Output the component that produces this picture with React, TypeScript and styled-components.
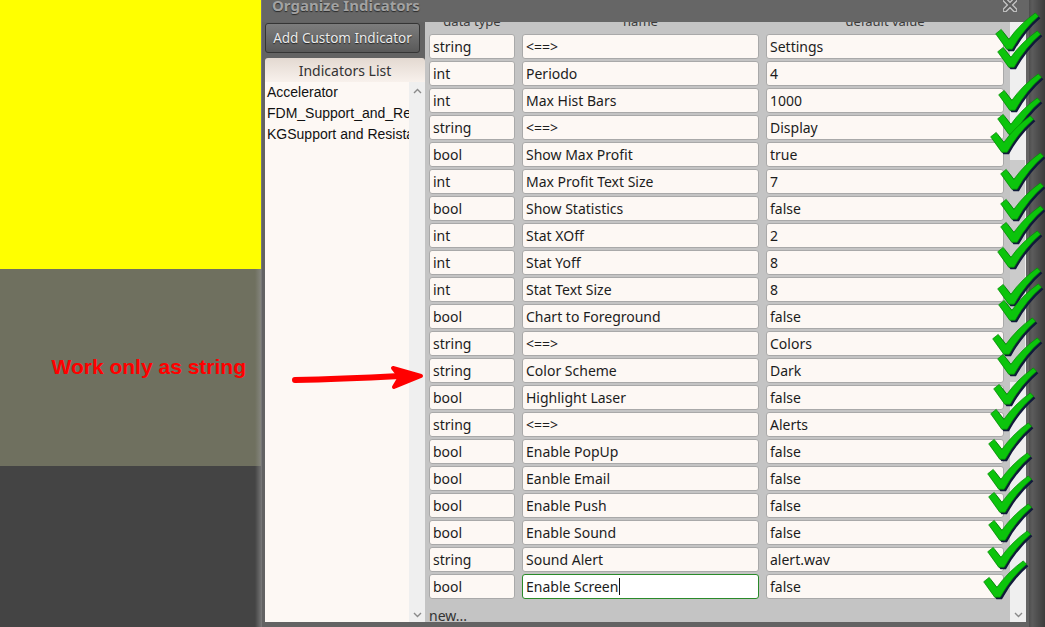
import { FC } from 'react';
import styled, { createGlobalStyle } from 'styled-components';

const GlobalStyle = createGlobalStyle`
    html, body {
        margin: 0;
        padding: 0;
        background: #444444;
        overflow: hidden;
    }
`

const Page = styled.div`
    position: relative;
    display: flex;
    width: 1045px;
    height: 627px;
    overflow: hidden;
    font-family: "Noto Sans", "Open Sans", sans-serif;
`

const LeftColumn = styled.div`
    position: relative;
    width: 261px;
    display: flex;
    flex-direction: column;
    &::after {
        content: '';
        position: absolute;
        top: 269px;
        right: 0;
        bottom: 0;
        width: 6px;
        background: linear-gradient(to right, rgba(140,140,140,0), rgba(150,150,150,0.55));
    }
`

const YellowBlock = styled.div`
    height: 269px;
    background: #ffff00;
`

const OliveBlock = styled.div`
    height: 197px;
    background: #6f705f;
    display: flex;
    align-items: center;
    justify-content: flex-end;
    padding-right: 15px;
`

const Note = styled.span`
    font-family: "Liberation Sans", Arial, sans-serif;
    font-weight: bold;
    font-size: 21px;
    color: #ff0000;
    margin-top: -2px;
`

const DarkBlock = styled.div`
    flex: 1;
    background: #444444;
`

const Window = styled.div`
    width: 767px;
    display: flex;
    flex-direction: column;
    background: #636363;
    border-left: 1px solid #777;
`

const TitleBar = styled.div`
    height: 22px;
    display: flex;
    justify-content: space-between;
    align-items: flex-start;
    padding: 0 12px 0 10px;
    background: #666666;
    overflow: hidden;
`

const Title = styled.span`
    font-weight: bold;
    font-size: 15px;
    line-height: 20px;
    margin-top: -5px;
    color: #a2a2a2;
    text-shadow: 0 1px 1px #2a2a2a;
`

const Body = styled.div`
    flex: 1;
    display: flex;
    padding: 0 3px 5px 3px;
    min-height: 0;
`

const Sidebar = styled.div`
    width: 160px;
    display: flex;
    flex-direction: column;
`

const AddButton = styled.button`
    height: 30px;
    width: 155px;
    margin-top: 1px;
    padding: 0;
    border: 1px solid #353535;
    border-radius: 3px;
    background: linear-gradient(#7d7d7d, #595959);
    color: #ececec;
    text-shadow: 0 1px 1px #222;
    font-family: "Noto Sans", "Open Sans", sans-serif;
    font-size: 13.5px;
`

const ListHeader = styled.div`
    margin-top: 5px;
    height: 24px;
    display: flex;
    align-items: center;
    justify-content: center;
    border-radius: 3px 3px 0 0;
    background: linear-gradient(#e3d9d1, #f8f1ec);
    color: #333;
    font-size: 14px;
`

const ListBox = styled.div`
    flex: 1;
    display: flex;
    min-height: 0;
    background: #fdf8f4;
`

const ListItems = styled.div`
    flex: 1;
    overflow: hidden;
    padding-left: 2px;
`

const ListItem = styled.div`
    font-family: "Liberation Sans", Arial, sans-serif;
    font-size: 14px;
    line-height: 21px;
    color: #111;
    white-space: nowrap;
`

const ScrollTrack = styled.div`
    width: 16px;
    display: flex;
    flex-direction: column;
    align-items: center;
    justify-content: space-between;
    padding: 6px 0 4px;
    background: #efefef;
    position: relative;
`

const Thumb = styled.div`
    position: absolute;
    left: 0;
    right: 1px;
    top: 138px;
    height: 222px;
    background: #cbcbcb;
`

const GridPanel = styled.div`
    flex: 1;
    display: flex;
    min-height: 0;
`

const GridContent = styled.div`
    flex: 1;
    background: #c4c4c4;
    overflow: hidden;
    display: flex;
    flex-direction: column;
    padding-left: 4px;
`

const Columns = styled.div`
    display: grid;
    grid-template-columns: 86px 237px 238px;
    column-gap: 7px;
`

const HeaderRow = styled(Columns)`
    height: 12px;
`

const HeaderLabel = styled.span`
    text-align: center;
    font-size: 13px;
    line-height: 16px;
    color: #3a3a3a;
    transform: translateY(-9px);
`

const Rows = styled.div`
    display: flex;
    flex-direction: column;
    gap: 2px;
`

const Field = styled.div<{ $focused?: boolean }>`
    height: 25px;
    box-sizing: border-box;
    display: flex;
    align-items: center;
    padding-left: 3px;
    border: 1px solid ${p => (p.$focused ? '#2a8a2a' : '#a9a9a9')};
    border-radius: 3px;
    background: ${p => (p.$focused ? '#ffffff' : '#fdf8f4')};
    color: #1c1c1c;
    font-size: 14px;
    white-space: nowrap;
    overflow: hidden;
`

const Caret = styled.span`
    width: 1px;
    height: 17px;
    background: #111;
    margin-left: 1px;
`

const NewLink = styled.div`
    margin-top: 8px;
    font-size: 14px;
    line-height: 18px;
    color: #333;
`

const Overlay = styled.svg`
    position: absolute;
    pointer-events: none;
`

const RightEdge = styled.div`
    flex: 1;
    background: linear-gradient(to right, #4e4e4e, #5c5c5c 20%, #3c3c3c);
`

const Chevron: FC<{ down?: boolean }> = ({ down }) => (
    <svg width="9" height="6" viewBox="0 0 9 6">
        <path d={down ? 'M1 1 L4.5 4.5 L8 1' : 'M1 5 L4.5 1.5 L8 5'} fill="none" stroke="#8a8a8a" strokeWidth="1.4" />
    </svg>
)

const CloseIcon = () => (
    <svg width="14" height="13" viewBox="0 0 14 13" style={{ marginTop: -1 }}>
        <path d="M2 1 L12 11 M12 1 L2 11" stroke="#c4c4c4" strokeWidth="5" strokeLinecap="round" />
        <path d="M2 1 L12 11 M12 1 L2 11" stroke="#5e5e5e" strokeWidth="2.4" strokeLinecap="round" />
    </svg>
)

const rows: [string, string, string][] = [
    ['string', '<==>', 'Settings'],
    ['int', 'Periodo', '4'],
    ['int', 'Max Hist Bars', '1000'],
    ['string', '<==>', 'Display'],
    ['bool', 'Show Max Profit', 'true'],
    ['int', 'Max Profit Text Size', '7'],
    ['bool', 'Show Statistics', 'false'],
    ['int', 'Stat XOff', '2'],
    ['int', 'Stat Yoff', '8'],
    ['int', 'Stat Text Size', '8'],
    ['bool', 'Chart to Foreground', 'false'],
    ['string', '<==>', 'Colors'],
    ['string', 'Color Scheme', 'Dark'],
    ['bool', 'Highlight Laser', 'false'],
    ['string', '<==>', 'Alerts'],
    ['bool', 'Enable PopUp', 'false'],
    ['bool', 'Eanble Email', 'false'],
    ['bool', 'Enable Push', 'false'],
    ['bool', 'Enable Sound', 'false'],
    ['string', 'Sound Alert', 'alert.wav'],
    ['bool', 'Enable Screen', 'false'],
];

// vertex (bottom point) of every hand-placed tick
const ticks: [number, number][] = [
    [1010, 47], [1012, 65], [1013, 108], [1012, 132], [1005, 150], [1015, 187],
    [1015, 217], [1015, 240], [1012, 265], [1012, 302], [1013, 318], [1007, 352],
    [1012, 372], [1008, 402], [1005, 427], [1003, 457], [1002, 487], [1003, 510],
    [1003, 538], [1002, 565], [998, 595],
];

const TICK = 'M-13 -12 L-8 -16 L-1 -7 Q9 -21 23 -31 L26 -28 Q12 -16 2 2 L-3 2 Z';

const App = () => {
    const focusedRow = rows.length - 1;
    return (
        <Page>
            <GlobalStyle />
            <LeftColumn>
                <YellowBlock />
                <OliveBlock>
                    <Note>Work only as string</Note>
                </OliveBlock>
                <DarkBlock />
            </LeftColumn>
            <Window>
                <TitleBar>
                    <Title>Organize Indicators</Title>
                    <CloseIcon />
                </TitleBar>
                <Body>
                    <Sidebar>
                        <AddButton>Add Custom Indicator</AddButton>
                        <ListHeader>Indicators List</ListHeader>
                        <ListBox>
                            <ListItems>
                                <ListItem>Accelerator</ListItem>
                                <ListItem>FDM_Support_and_Resistance</ListItem>
                                <ListItem>KGSupport and Resistance</ListItem>
                            </ListItems>
                            <ScrollTrack>
                                <Chevron />
                                <Chevron down />
                            </ScrollTrack>
                        </ListBox>
                    </Sidebar>
                    <GridPanel>
                        <GridContent>
                            <HeaderRow>
                                <HeaderLabel>data type</HeaderLabel>
                                <HeaderLabel>name</HeaderLabel>
                                <HeaderLabel>default value</HeaderLabel>
                            </HeaderRow>
                            <Rows>
                                {rows.map(([type, name, value], i) => (
                                    <Columns key={i}>
                                        <Field>{type}</Field>
                                        <Field $focused={i === focusedRow}>
                                            {name}
                                            {i === focusedRow && <Caret />}
                                        </Field>
                                        <Field>{value}</Field>
                                    </Columns>
                                ))}
                            </Rows>
                            <NewLink>new...</NewLink>
                        </GridContent>
                        <ScrollTrack>
                            <Thumb />
                            <Chevron />
                            <Chevron down />
                        </ScrollTrack>
                    </GridPanel>
                </Body>
            </Window>
            <RightEdge />

            <Overlay width="140" height="36" viewBox="0 0 140 36" style={{ left: 290, top: 360 }}>
                <path d="M5 20 Q50 19 110 16" fill="none" stroke="#ff0000" strokeWidth="6" strokeLinecap="round" />
                <path d="M103 8 L131 16 L104 27 L110 17 Z" fill="#ff0000" stroke="#ff0000" strokeWidth="4" strokeLinejoin="round" />
            </Overlay>

            <Overlay width="65" height="627" viewBox="980 0 65 627" style={{ left: 980, top: 0 }}>
                {ticks.map(([x, y], i) => (
                    <g key={i} transform={`translate(${x} ${y}) scale(1.1)`}>
                        <path d={TICK} transform="translate(1.6 1.8)" fill="#101a3a" />
                        <path d={TICK} fill="#0cc40c" stroke="#078c07" strokeWidth="0.7" />
                    </g>
                ))}
            </Overlay>
        </Page>
    );
}

export default App;
